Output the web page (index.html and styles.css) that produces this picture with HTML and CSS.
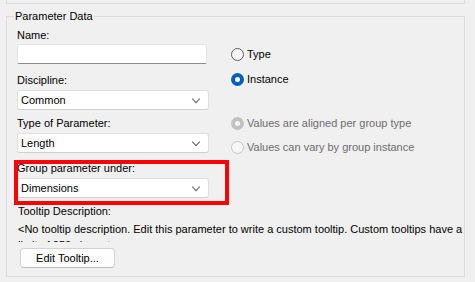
FILE: index.html
```html
<!DOCTYPE html>
<html>
<head>
<meta charset="utf-8">
<link rel="stylesheet" href="styles.css">
</head>
<body>
<div class="prev-box"></div>
<div class="group">
  <span class="group-title">Parameter Data</span>
  <div class="top-row">
    <div class="left-col">
      <div class="label first">Name:</div>
      <div class="textbox"></div>
      <div class="label gap8">Discipline:</div>
      <div class="combo">Common<span class="chev"></span></div>
      <div class="label gap5">Type of Parameter:</div>
      <div class="combo">Length<span class="chev"></span></div>
      <div class="label gap7">Group parameter under:</div>
      <div class="combo">Dimensions<span class="chev"></span></div>
    </div>
    <div class="right-col">
      <div class="radio-row"><span class="radio"></span>Type</div>
      <div class="radio-row r2"><span class="radio checked"></span>Instance</div>
      <div class="radio-row r3 disabled"><span class="radio checked"></span>Values are aligned per group type</div>
      <div class="radio-row r4 disabled"><span class="radio"></span>Values can vary by group instance</div>
    </div>
  </div>
  <div class="label tip-label">Tooltip Description:</div>
  <div class="tip-text">&lt;No tooltip description. Edit this parameter to write a custom tooltip. Custom tooltips have a limit of 250 characters.&gt;</div>
  <div class="button">Edit Tooltip...</div>
  <div class="highlight"></div>
</div>
</body>
</html>
```
FILE: styles.css
```css
html, body {
  margin: 0;
  padding: 0;
  background: #f0f0f0;
  font-family: "Liberation Sans", Arial, sans-serif;
  font-size: 11px;
  color: #000;
}
.prev-box {
  height: 3px;
  margin: 0 10px 0 6px;
  border: 1px solid #dcdcdc;
  border-top: none;
}
.group {
  position: relative;
  margin: 12px 10px 0 6px;
  height: 261px;
  border: 1px solid #dcdcdc;
  box-sizing: border-box;
  padding: 0 0 0 10px;
}
.group-title {
  position: absolute;
  top: -9px;
  left: 7px;
  padding: 0 1px;
  line-height: 16px;
  background: #f0f0f0;
}
.top-row {
  display: flex;
  gap: 22px;
}
.left-col {
  width: 192px;
  display: flex;
  flex-direction: column;
}
.label {
  line-height: 16px;
  height: 16px;
  white-space: nowrap;
}
.label.first { margin-top: 10px; }
.gap8 { margin-top: 8px; }
.gap5 { margin-top: 5px; }
.gap7 { margin-top: 7px; }
.textbox {
  margin-top: 1px;
  width: 190px;
  height: 20px;
  box-sizing: border-box;
  background: #fff;
  border: 1px solid #e3e3e3;
  border-bottom-color: #8a8a8a;
  border-radius: 2px;
}
.combo {
  position: relative;
  margin-top: 2px;
  height: 20px;
  box-sizing: border-box;
  background: #fff;
  border: 1px solid #e0e0e0;
  border-bottom-color: #cfcfcf;
  border-radius: 3px;
  padding-left: 3px;
  line-height: 18px;
}
.chev {
  position: absolute;
  right: 9px;
  top: 5px;
  width: 5px;
  height: 5px;
  border-right: 1px solid #606060;
  border-bottom: 1px solid #606060;
  transform: rotate(45deg);
}
.right-col {
  padding-top: 29px;
  display: flex;
  flex-direction: column;
}
.radio-row {
  display: flex;
  align-items: center;
  height: 16px;
  line-height: 16px;
  white-space: nowrap;
}
.r2 { margin-top: 9px; }
.r3 { margin-top: 28px; }
.r4 { margin-top: 8px; }
.radio {
  width: 13px;
  height: 13px;
  box-sizing: border-box;
  border: 1px solid #5c5c5c;
  border-radius: 50%;
  margin-right: 3px;
  background: #f7f7f7;
  flex: none;
}
.radio.checked {
  border: 4px solid #005fb8;
  background: #fff;
}
.disabled { color: #6d6d6d; }
.disabled .radio {
  border-color: #c6c6c6;
}
.disabled .radio.checked {
  border: 4px solid #c2c2c2;
  background: #f4f4f4;
}
.tip-label {
  margin-top: 5px;
  margin-left: 1px;
}
.tip-text {
  margin-top: 2px;
  margin-left: 1px;
  width: 446px;
  height: 21px;
  overflow: hidden;
  line-height: 16px;
}
.button {
  margin-top: 6px;
  margin-left: 3px;
  width: 95px;
  height: 20px;
  box-sizing: border-box;
  background: #fdfdfd;
  border: 1px solid #d3d3d3;
  border-bottom-color: #bdbdbd;
  border-radius: 4px;
  text-align: center;
  line-height: 18px;
}
.highlight {
  position: absolute;
  left: 7px;
  top: 143px;
  width: 215px;
  height: 45px;
  box-sizing: border-box;
  border: 4px solid #ff0000;
}
```
